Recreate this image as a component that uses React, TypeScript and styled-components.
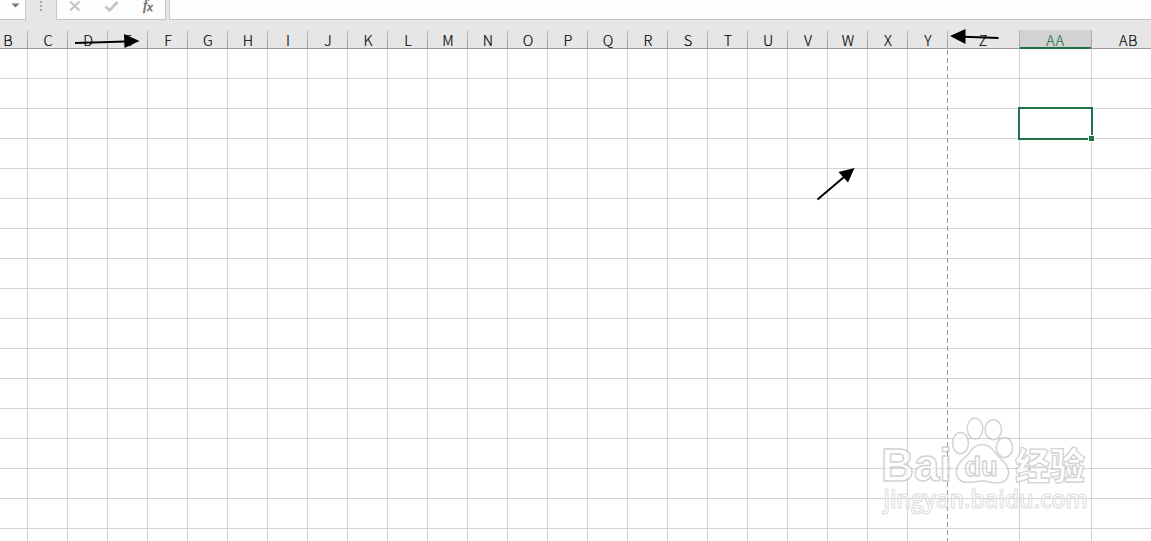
import React from 'react';
import styled, { createGlobalStyle } from 'styled-components';

const Global = createGlobalStyle`
  * { box-sizing: border-box; }
  body { margin: 0; background: #fff; overflow: hidden; }
`;

const sans = `'Noto Sans CJK SC', 'Open Sans', sans-serif`;

const Page = styled.div`
  position: relative;
  width: 1151px;
  height: 541px;
  overflow: hidden;
  background: #fff;
  font-family: ${sans};
`;

const FormulaBar = styled.div`
  display: flex;
  height: 30px;
  padding-bottom: 10px;
  background: #e6e6e6;
`;

const NameBox = styled.div`
  width: 26px;
  background: #fdfdfd;
  border: solid #c6c6c6;
  border-width: 0 1px 1px 0;
`;

const Grip = styled.div`
  width: 30px;
  svg { display: block; }
`;

const Actions = styled.div`
  width: 110px;
  background: #fdfdfd;
  border: solid #c6c6c6;
  border-width: 0 1px 1px 1px;
  margin-right: 3px;
  svg { display: block; overflow: visible; }
`;

const FormulaInput = styled.div`
  flex: 1;
  background: #fdfdfd;
  border: solid #c6c6c6;
  border-width: 0 0 1px 1px;
`;

const Row = styled.div`
  display: flex;
`;

const HeaderRow = styled(Row)`
  height: 19px;
  background: #e6e6e6;
`;

const HeaderCell = styled.div<{ $w: number; $active?: boolean }>`
  flex: none;
  width: ${p => p.$w}px;
  height: 19px;
  padding-left: ${p => (p.$w > 40 ? 0 : 1)}px;
  border-right: 1px solid;
  border-image: ${p => (p.$active ? 'linear-gradient(#b0b0b0, #a0a0a0)' : 'linear-gradient(#c4c4c4, #949494)')} 1;
  border-bottom: 0;
  box-shadow: inset 0 ${p => (p.$active ? '-2px #217346' : '-1px #999')};
  background: ${p => (p.$active ? '#d2d2d2' : 'transparent')};
  color: ${p => (p.$active ? '#217346' : '#000')};
  font-size: 14.5px;
  font-weight: 300;
  -webkit-text-stroke: 0.15px currentColor;
  letter-spacing: ${p => (p.$w > 40 ? 0.7 : 0)}px;
  line-height: 19px;
  text-align: center;
  white-space: nowrap;
`;

const Cell = styled.div<{ $w: number; $dashed?: boolean; $active?: boolean }>`
  ${p => p.$active && 'position: relative; z-index: 1;'}
  flex: none;
  width: ${p => p.$w}px;
  height: 30px;
  border-right: 1px solid ${p => (p.$dashed ? 'transparent' : '#d4d4d4')};
  border-bottom: 1px solid #d4d4d4;
`;

const Selection = styled.div`
  position: absolute;
  left: -2px;
  top: -2px;
  width: 75px;
  height: 33px;
  border: 2px solid #217346;
`;

const FillHandle = styled.div`
  position: absolute;
  right: -4px;
  bottom: -4px;
  width: 7px;
  height: 7px;
  background: #217346;
  border: 1px solid #fff;
`;

const Overlay = styled.svg`
  position: absolute;
  left: 0;
  top: 0;
  pointer-events: none;
`;

const columns = [
  ...'BCDEFGHIJKLMNOPQRSTUVWXY'.split('').map((name, i) => ({ name, w: i === 0 ? 28 : 40 })),
  { name: 'Z', w: 72 },
  { name: 'AA', w: 72 },
  { name: 'AB', w: 74 },
];

const BColumnText = styled.span`
  position: relative;
  left: -6px;
`;

function Watermark() {
  return (
    <g opacity=".65" fill="#fff" stroke="#bcbcbc" strokeWidth="1.5" strokeLinejoin="round">
      <ellipse cx="960.5" cy="443" rx="8" ry="10.5" />
      <ellipse cx="975" cy="428.5" rx="7.8" ry="10.5" />
      <ellipse cx="993.3" cy="429.7" rx="8.2" ry="10" />
      <ellipse cx="1004.5" cy="447.5" rx="8.2" ry="10" />
      <path d="M982 444.500c-6.500 0-10 4-13 8.500-2.500 3.500-6.500 6-9 9.500-7 9-3.500 20 7.500 20 6 0 9.500-1.500 15-1.500s9 2 15 2c11 0 14-11 8-19-3-4-7-7-10-11-3-4.500-7-8.500-13.500-8.500z" />
      <text x="881" y="481" fontSize="47" fontWeight="700" fontFamily="Liberation Sans, sans-serif" textLength="71" lengthAdjust="spacingAndGlyphs">Bai</text>
      <text x="1015" y="479.500" fontSize="37" fontWeight="900" fontFamily="Noto Sans CJK SC, sans-serif" strokeWidth="1.300" textLength="70" lengthAdjust="spacingAndGlyphs">经验</text>
      <text x="883.500" y="508" fontSize="25" fontWeight="600" fontFamily="Open Sans, sans-serif" stroke="#cfcfcf" strokeWidth="1.200" textLength="204" lengthAdjust="spacingAndGlyphs">jingyan.baidu.com</text>
      <text x="964.500" y="476" fontSize="28" fontWeight="700" fontFamily="Liberation Sans, sans-serif" textLength="33" lengthAdjust="spacingAndGlyphs">du</text>
    </g>
  );
}

export default function App() {
  return (
    <Page>
      <Global />
      <FormulaBar>
        <NameBox>
          <svg width="25" height="19"><path d="M11.500 3.500h8l-4 4z" fill="#777" /></svg>
        </NameBox>
        <Grip>
          <svg width="30" height="19" fill="#a8a8a8">
            <rect x="14" y="1" width="2" height="2" />
            <rect x="14" y="5" width="2" height="2" />
            <rect x="14" y="9" width="2" height="2" />
          </svg>
        </Grip>
        <Actions>
          <svg width="108" height="19" fill="none">
            <path d="M13 1.500l9.500 9M22.500 1.500L13 10.500" stroke="#c4c4c4" strokeWidth="2" />
            <path d="M48.500 6.500l4 4L60.500 2" stroke="#c4c4c4" strokeWidth="2.600" />
            <g fill="#666" stroke="#666" strokeWidth=".4" fontFamily="Liberation Serif, serif" fontStyle="italic">
              <text x="86" y="9.500" fontSize="15">f</text>
              <text x="90" y="10.500" fontSize="13">x</text>
            </g>
          </svg>
        </Actions>
        <FormulaInput />
      </FormulaBar>
      <HeaderRow>
        {columns.map(c => (
          <HeaderCell key={c.name} $w={c.w} $active={c.name === 'AA'}>
            {c.name === 'B' ? <BColumnText>B</BColumnText> : c.name}
          </HeaderCell>
        ))}
      </HeaderRow>
      {Array.from({ length: 17 }, (_, r) => (
        <Row key={r}>
          {columns.map(c => {
            const active = c.name === 'AA' && r === 2;
            return (
              <Cell key={c.name} $w={c.w} $dashed={c.name === 'Y'} $active={active}>
                {active && (
                  <Selection>
                    <FillHandle />
                  </Selection>
                )}
              </Cell>
            );
          })}
        </Row>
      ))}
      <Overlay width="1151" height="541">
        <path d="M947.500 50V541" stroke="#999" strokeDasharray="5 3" />
        <Watermark />
        <g stroke="#000" strokeWidth="2">
          <path d="M75 43L126 41.500M998.500 38L964 36.800M817.500 199.500L844 177" />
        </g>
        <path d="M124 34L139.500 41L124.500 48zM950 36L965.500 29V44zM854.500 168L848 182.500L838.500 172z" />
      </Overlay>
    </Page>
  );
}
